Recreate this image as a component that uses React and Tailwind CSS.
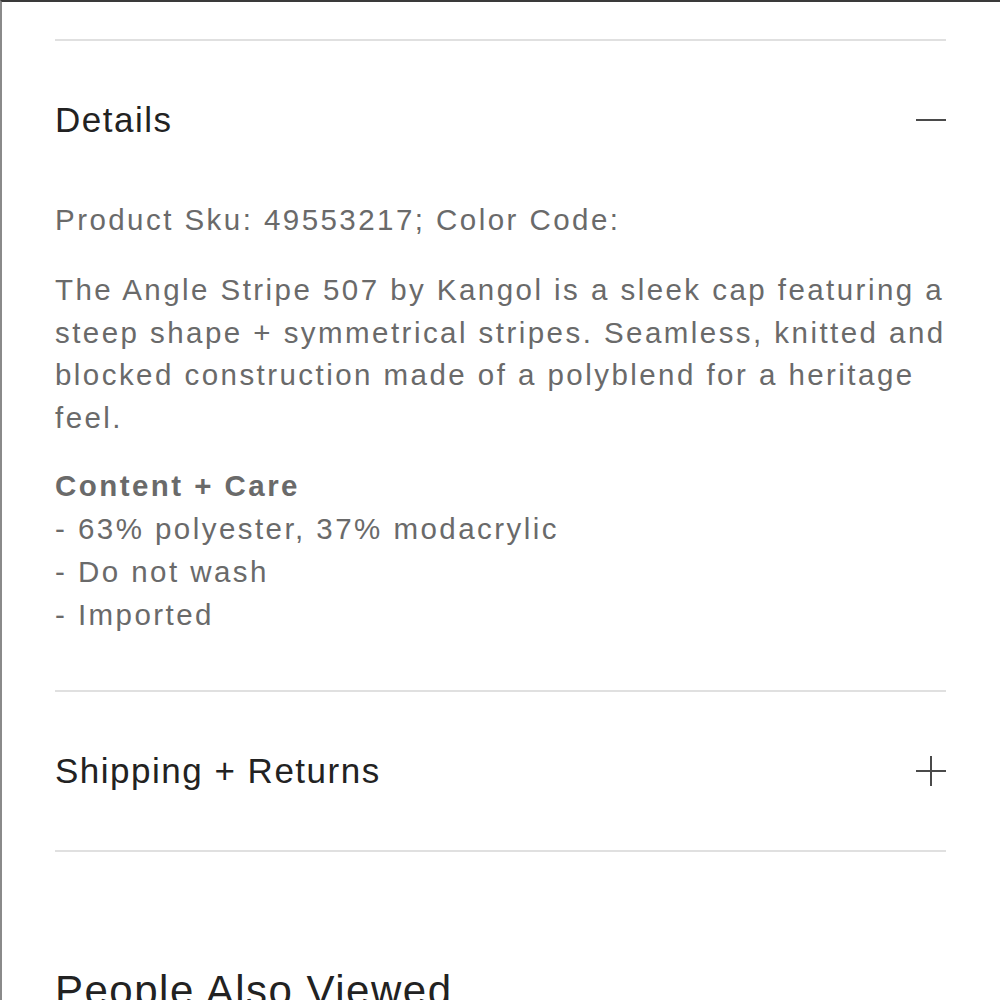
export default function App() {
  return (
    <div className="min-h-screen bg-white border-t-2 border-l-2 border-t-[#3a3a3a] border-l-[#8a8a8a] font-['Liberation_Sans',Arial,sans-serif] overflow-hidden">
      <div className="pl-[53px] pr-[54px] pt-[37px]">
        <div className="h-[2px] bg-[#e0e0e0]" />

        {/* Details */}
        <div className="flex items-center justify-between h-[158px]">
          <h3 className="text-[35px] tracking-[1.5px] text-[#222]">Details</h3>
          <svg width="30" height="30" viewBox="0 0 30 30" className="text-[#4a4a4a]">
            <line x1="0" y1="15" x2="30" y2="15" stroke="currentColor" strokeWidth="2" />
          </svg>
        </div>

        <div className="-mr-[6px] text-[29.5px] tracking-[2.45px] text-[#6a6a6a]">
          <p className="leading-[42px]">Product Sku: 49553217; Color Code:</p>
          <p className="mt-[28px] leading-[42.5px]">
            The Angle Stripe 507 by Kangol is a sleek cap featuring a steep shape + symmetrical stripes. Seamless, knitted and blocked construction made of a polyblend for a heritage feel.
          </p>
          <div className="mt-[25px] leading-[43px]">
            <p className="font-bold">Content + Care</p>
            <p>- 63% polyester, 37% modacrylic</p>
            <p>- Do not wash</p>
            <p>- Imported</p>
          </div>
        </div>

        <div className="mt-[54px] h-[2px] bg-[#e0e0e0]" />

        {/* Shipping */}
        <div className="flex items-center justify-between h-[158px]">
          <h3 className="text-[35px] tracking-[1.5px] text-[#222]">Shipping + Returns</h3>
          <svg width="30" height="30" viewBox="0 0 30 30" className="text-[#4a4a4a]">
            <line x1="0" y1="15" x2="30" y2="15" stroke="currentColor" strokeWidth="2" />
            <line x1="15" y1="0" x2="15" y2="30" stroke="currentColor" strokeWidth="2" />
          </svg>
        </div>

        <div className="h-[2px] bg-[#e0e0e0]" />

        <h2 className="mt-[118px] text-[42px] leading-[42px] tracking-[1.5px] text-[#222]">People Also Viewed</h2>
      </div>
    </div>
  )
}
